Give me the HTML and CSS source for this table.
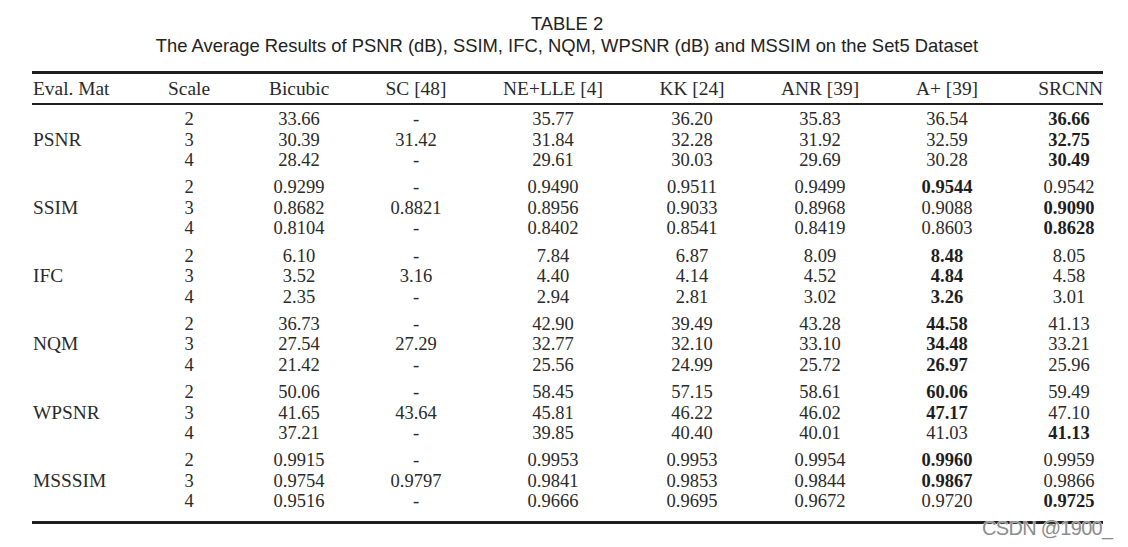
FILE: index.html
```html
<!DOCTYPE html>
<html lang="en">
<head>
<meta charset="utf-8">
<title>TABLE 2</title>
<link rel="stylesheet" href="styles.css">
</head>
<body>
<div class="page">
  <div class="caption">
    <div class="caption-line">TABLE 2</div>
    <div class="caption-line">The Average Results of PSNR (dB), SSIM, IFC, NQM, WPSNR (dB) and MSSIM on the Set5 Dataset</div>
  </div>
  <table class="results">
    <colgroup>
      <col class="c-eval"><col class="c-scale"><col class="c-bic"><col class="c-sc"><col class="c-ne"><col class="c-kk"><col class="c-anr"><col class="c-ap"><col class="c-srcnn">
    </colgroup>
    <thead>
      <tr>
        <th class="left">Eval. Mat</th><th>Scale</th><th>Bicubic</th><th>SC [48]</th><th>NE+LLE [4]</th><th>KK [24]</th><th>ANR [39]</th><th>A+ [39]</th><th class="right">SRCNN</th>
      </tr>
    </thead>
    <tbody>
      <tr class="first"><td></td><td>2</td><td>33.66</td><td>-</td><td>35.77</td><td>36.20</td><td>35.83</td><td>36.54</td><td class="b">36.66</td></tr>
      <tr><td class="left">PSNR</td><td>3</td><td>30.39</td><td>31.42</td><td>31.84</td><td>32.28</td><td>31.92</td><td>32.59</td><td class="b">32.75</td></tr>
      <tr><td></td><td>4</td><td>28.42</td><td>-</td><td>29.61</td><td>30.03</td><td>29.69</td><td>30.28</td><td class="b">30.49</td></tr>

      <tr class="group"><td></td><td>2</td><td>0.9299</td><td>-</td><td>0.9490</td><td>0.9511</td><td>0.9499</td><td class="b">0.9544</td><td>0.9542</td></tr>
      <tr><td class="left">SSIM</td><td>3</td><td>0.8682</td><td>0.8821</td><td>0.8956</td><td>0.9033</td><td>0.8968</td><td>0.9088</td><td class="b">0.9090</td></tr>
      <tr><td></td><td>4</td><td>0.8104</td><td>-</td><td>0.8402</td><td>0.8541</td><td>0.8419</td><td>0.8603</td><td class="b">0.8628</td></tr>

      <tr class="group"><td></td><td>2</td><td>6.10</td><td>-</td><td>7.84</td><td>6.87</td><td>8.09</td><td class="b">8.48</td><td>8.05</td></tr>
      <tr><td class="left">IFC</td><td>3</td><td>3.52</td><td>3.16</td><td>4.40</td><td>4.14</td><td>4.52</td><td class="b">4.84</td><td>4.58</td></tr>
      <tr><td></td><td>4</td><td>2.35</td><td>-</td><td>2.94</td><td>2.81</td><td>3.02</td><td class="b">3.26</td><td>3.01</td></tr>

      <tr class="group"><td></td><td>2</td><td>36.73</td><td>-</td><td>42.90</td><td>39.49</td><td>43.28</td><td class="b">44.58</td><td>41.13</td></tr>
      <tr><td class="left">NQM</td><td>3</td><td>27.54</td><td>27.29</td><td>32.77</td><td>32.10</td><td>33.10</td><td class="b">34.48</td><td>33.21</td></tr>
      <tr><td></td><td>4</td><td>21.42</td><td>-</td><td>25.56</td><td>24.99</td><td>25.72</td><td class="b">26.97</td><td>25.96</td></tr>

      <tr class="group"><td></td><td>2</td><td>50.06</td><td>-</td><td>58.45</td><td>57.15</td><td>58.61</td><td class="b">60.06</td><td>59.49</td></tr>
      <tr><td class="left">WPSNR</td><td>3</td><td>41.65</td><td>43.64</td><td>45.81</td><td>46.22</td><td>46.02</td><td class="b">47.17</td><td>47.10</td></tr>
      <tr><td></td><td>4</td><td>37.21</td><td>-</td><td>39.85</td><td>40.40</td><td>40.01</td><td>41.03</td><td class="b">41.13</td></tr>

      <tr class="group"><td></td><td>2</td><td>0.9915</td><td>-</td><td>0.9953</td><td>0.9953</td><td>0.9954</td><td class="b">0.9960</td><td>0.9959</td></tr>
      <tr><td class="left">MSSSIM</td><td>3</td><td>0.9754</td><td>0.9797</td><td>0.9841</td><td>0.9853</td><td>0.9844</td><td class="b">0.9867</td><td>0.9866</td></tr>
      <tr class="last"><td></td><td>4</td><td>0.9516</td><td>-</td><td>0.9666</td><td>0.9695</td><td>0.9672</td><td>0.9720</td><td class="b">0.9725</td></tr>
    </tbody>
  </table>
  <div class="watermark">CSDN @1900_</div>
</div>
</body>
</html>
```

FILE: styles.css
```css
html, body {
  margin: 0;
  padding: 0;
  background: #ffffff;
}

.page {
  position: relative;
  width: 1128px;
  height: 547px;
  overflow: hidden;
}

.caption {
  padding-top: 13px;
  padding-left: 6px;
  text-align: center;
  font-family: "Liberation Sans", Arial, sans-serif;
  font-size: 18.4px;
  line-height: 22px;
  color: #222222;
}

.results {
  margin: 14px 0 0 32px;
  width: 1071px;
  table-layout: fixed;
  border-collapse: collapse;
  border-top: 3px solid #1e1e1e;
  border-bottom: 3px solid #1e1e1e;
  font-family: "Liberation Serif", "Times New Roman", serif;
  font-size: 18.5px;
  color: #2a2a2a;
}

.c-eval { width: 77px; }
.c-scale { width: 160px; }
.c-bic { width: 60px; }
.c-sc { width: 174px; }
.c-ne { width: 100px; }
.c-kk { width: 178px; }
.c-anr { width: 78px; }
.c-ap { width: 176px; }
.c-srcnn { width: 68px; }

.results th,
.results td {
  padding: 0;
  text-align: center;
  white-space: nowrap;
  font-weight: normal;
  overflow: visible;
}

.results thead th {
  height: 28px;
  line-height: 28px;
  padding-top: 1px;
  font-size: 19.4px;
  border-bottom: 2px solid #1e1e1e;
}

.results td {
  height: 20.5px;
  line-height: 20.5px;
}

.results .left {
  text-align: left;
  padding-left: 1px;
}

.results td.left {
  font-size: 19.4px;
}

.results th.right {
  text-align: right;
}

.results td.b {
  font-weight: bold;
  color: #1e1e1e;
}

.results tr.first td {
  padding-top: 4px;
}

.results tr.group td {
  padding-top: 6.8px;
}

.results tr.last td {
  padding-bottom: 9.5px;
}

.watermark {
  position: absolute;
  left: 982px;
  top: 517px;
  font-family: "Liberation Sans", Arial, sans-serif;
  font-size: 20px;
  line-height: 22px;
  letter-spacing: -0.7px;
  color: #8c8c8c;
  text-shadow: 0 0 1px #ffffff, 0 0 1px #ffffff;
}
```
